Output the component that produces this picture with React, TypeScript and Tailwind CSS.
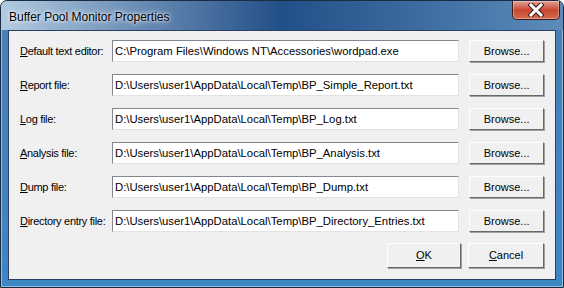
import React from 'react';

const rows = [
  { key: 'D', rest: 'efault text editor:', value: 'C:\\Program Files\\Windows NT\\Accessories\\wordpad.exe' },
  { key: 'R', rest: 'eport file:', value: 'D:\\Users\\user1\\AppData\\Local\\Temp\\BP_Simple_Report.txt' },
  { key: 'L', rest: 'og file:', value: 'D:\\Users\\user1\\AppData\\Local\\Temp\\BP_Log.txt' },
  { key: 'A', rest: 'nalysis file:', value: 'D:\\Users\\user1\\AppData\\Local\\Temp\\BP_Analysis.txt' },
  { key: 'D', rest: 'ump file:', value: 'D:\\Users\\user1\\AppData\\Local\\Temp\\BP_Dump.txt' },
  { key: 'D', rest: 'irectory entry file:', value: 'D:\\Users\\user1\\AppData\\Local\\Temp\\BP_Directory_Entries.txt' },
];

const font = { fontFamily: '"Liberation Sans", Arial, sans-serif' };

const WinButton: React.FC<{ children: React.ReactNode; className?: string }> = ({ children, className = '' }) => (
  <button
    className={`flex items-center justify-center border border-t-white border-l-white border-r-[#696969] border-b-[#696969] bg-[#f0f0f0] text-[11px] text-black shadow-[1px_1px_0_#a0a0a0] ${className}`}
  >
    {children}
  </button>
);

const App: React.FC = () => {
  return (
    <div className="w-[564px] h-[288px] overflow-hidden bg-white">
      {/* window frame */}
      <div className="w-[564px] h-[288px] flex flex-col rounded-t-[7px] border border-[#1b2b42] bg-gradient-to-b from-[#4b7fb6] to-[#3d86c4] shadow-[inset_0_0_0_1px_rgba(255,255,255,0.45)]">
        {/* title bar */}
        <div className="h-[29px] flex items-start justify-between rounded-t-[6px] bg-gradient-to-r from-[#b3cbe1] via-[#214f87] via-50% to-[#5c8bbb]">
          <span
            className="mt-[7px] ml-[8px] text-[12px] text-black [text-shadow:0_0_6px_#fff,0_0_3px_#fff]"
            style={font}
          >
            Buffer Pool Monitor Properties
          </span>
          {/* close button */}
          <div className="mr-[3px] w-[48px] h-[19px] flex items-center justify-center rounded-b-[5px] border border-t-0 border-[#3d1a16] bg-gradient-to-b from-[#e0a196] via-[#c7452f] via-50% to-[#d46a4e] shadow-[inset_0_0_0_1px_rgba(255,255,255,0.35)]">
            <svg width="16" height="14" viewBox="0 0 16 14">
              <path d="M3 2 L13 12 M13 2 L3 12" stroke="#3a2020" strokeWidth="5" strokeLinecap="square" />
              <path d="M3 2 L13 12 M13 2 L3 12" stroke="#ffffff" strokeWidth="3" strokeLinecap="square" />
            </svg>
          </div>
        </div>

        {/* client area */}
        <div className="mx-[7px] h-[250px] border border-[#2a4060] bg-[#f0f0f0] px-[11px] pt-[9px]" style={font}>
          <div className="flex flex-col gap-[12px]">
            {rows.map((r, i) => (
              <div key={i} className="flex items-center h-[22px]">
                <label className="w-[92px] shrink-0 text-[11px] tracking-[-0.3px] text-black whitespace-nowrap">
                  <span className="underline underline-offset-[1px]">{r.key}</span>
                  {r.rest}
                </label>
                <div className="w-[348px] h-[22px] flex items-center border border-t-[#828790] border-l-[#828790] border-r-[#e3e3e3] border-b-[#e3e3e3] bg-white pl-[2px] text-[11.3px] text-black whitespace-nowrap overflow-hidden">
                  {r.value}
                </div>
                <WinButton className="ml-[10px] w-[75px] h-[22px]">Browse...</WinButton>
              </div>
            ))}
          </div>
          <div className="mt-[11px] flex justify-end gap-[7px]">
            <WinButton className="w-[74px] h-[25px]">
              <span className="underline underline-offset-[1px]">O</span>K
            </WinButton>
            <WinButton className="w-[76px] h-[25px]">
              <span className="underline underline-offset-[1px]">C</span>ancel
            </WinButton>
          </div>
        </div>
      </div>
    </div>
  );
};

export default App;
